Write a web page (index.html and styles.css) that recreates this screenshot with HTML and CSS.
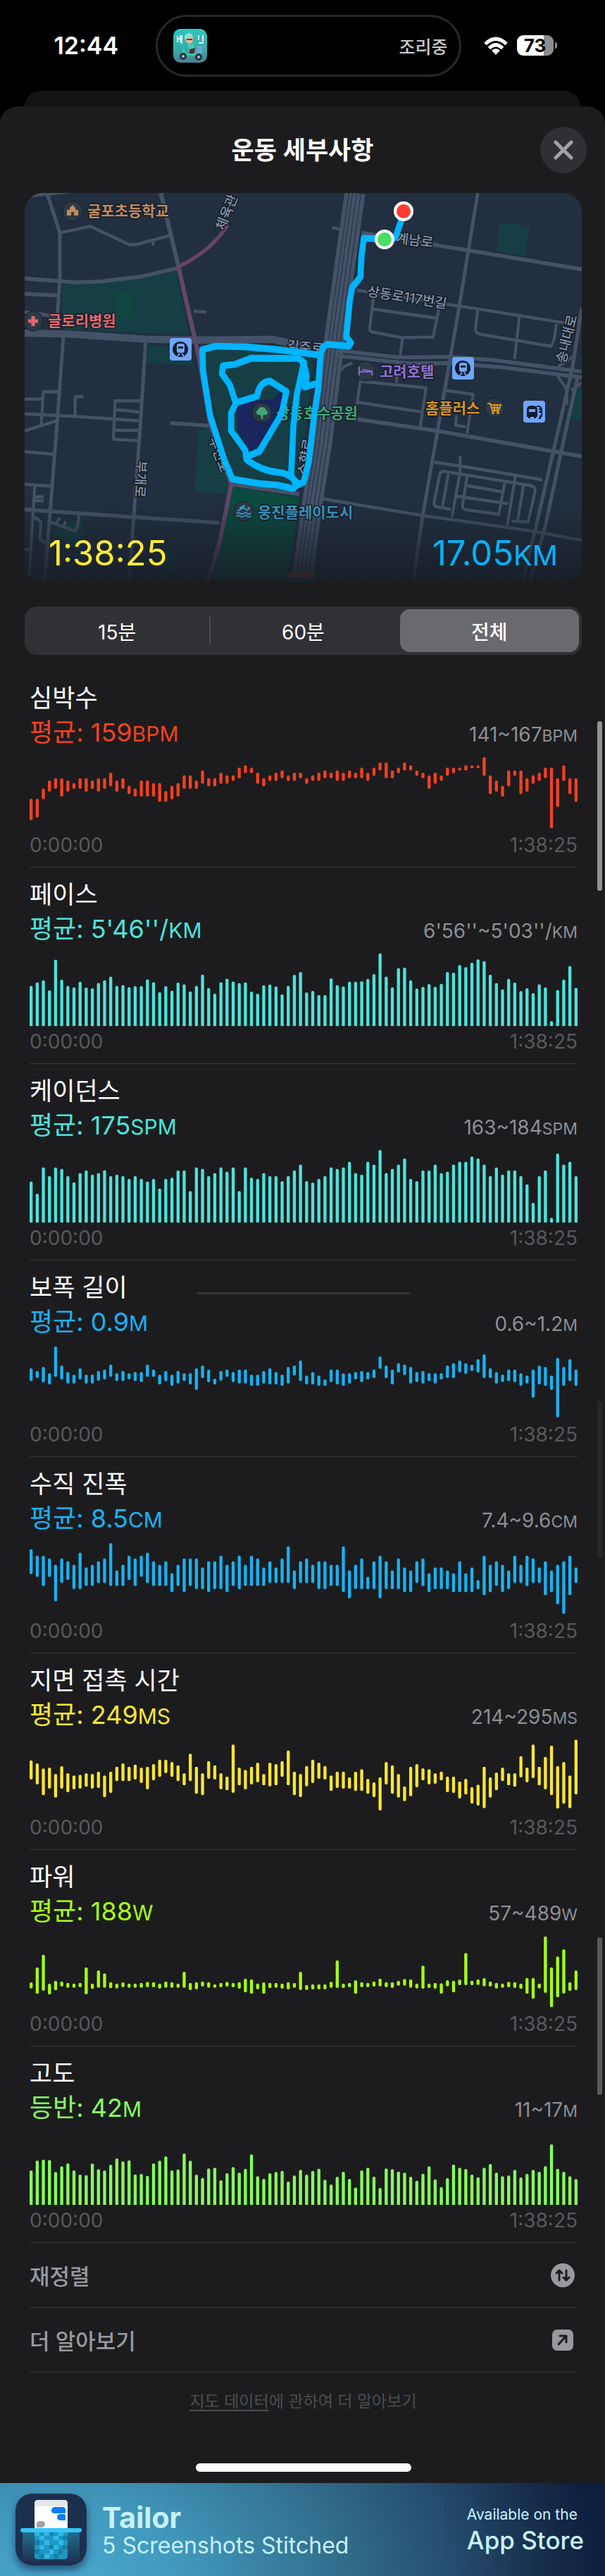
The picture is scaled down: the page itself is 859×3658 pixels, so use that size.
FILE: index.html
```html
<!DOCTYPE html>
<html lang="ko">
<head>
    <meta charset="UTF-8">
    <meta name="viewport" content="width=device-width, initial-scale=1.0">
    <title>운동 세부사항</title>
    <link rel="stylesheet" href="styles.css">
</head>
<body>
    <header class="status-bar">
        <time class="clock">12:44</time>
        <div class="island">
            <svg class="island-icon" viewBox="0 0 48 48" aria-hidden="true">
                <defs>
                    <linearGradient id="deliveryBg" x1="0" y1="0" x2="0" y2="1">
                        <stop offset="0" stop-color="#2fc6bf"/>
                        <stop offset=".65" stop-color="#35aaa9"/>
                        <stop offset="1" stop-color="#4f7f93"/>
                    </linearGradient>
                </defs>
                <rect width="48" height="48" rx="10" fill="url(#deliveryBg)"/>
                <path d="M6 10v9M6 14h4M10 9v10M12 9v12M36 9v7M42 9v9M36 20h7" stroke="#d9f7f3" stroke-width="2" fill="none"/>
                <circle cx="22" cy="12" r="6" fill="#8fe0da"/>
                <circle cx="23" cy="16" r="5" fill="#e9b596"/>
                <path d="M19 15h8" stroke="#5b4436" stroke-width="2"/>
                <path d="M20 22l8-1 3 9-8 4z" fill="#4cc9c0"/>
                <path d="M23 29l8-2-2 9-6 2z" fill="#4a2f2b"/>
                <rect x="33" y="24" width="8" height="11" rx="2" fill="#6ea4c9"/>
                <path d="M14 25l4 10h18l3 3H13z" fill="#3ec7a9"/>
                <circle cx="14" cy="39" r="5" fill="#27323c"/><circle cx="14" cy="39" r="2" fill="#a9c4cc"/>
                <circle cx="36" cy="40" r="5" fill="#27323c"/><circle cx="36" cy="40" r="2" fill="#a9c4cc"/>
            </svg>
            <span class="island-text">조리중</span>
        </div>
        <div class="status-icons">
            <svg class="wifi" viewBox="0 0 34 26" aria-label="Wi-Fi">
                <g fill="none" stroke="#fff" stroke-width="5">
                    <path d="M2 10.500Q17-4 32 10.500"/>
                    <path d="M7.500 16.500Q17 7 26.500 16.500"/>
                </g>
                <path d="M17 26l-6-6.500q6-5 12 0z" fill="#fff"/>
            </svg>
            <div class="battery"><span>73</span></div>
        </div>
    </header>
    <div class="sheet-behind"></div>

    <main class="sheet">
        <div class="sheet-header">
            <h1>운동 세부사항</h1>
            <button class="close-btn" type="button" aria-label="닫기">
                <svg viewBox="0 0 28 28"><path d="M3 3l22 22M25 3L3 25"/></svg>
            </button>
        </div>

        <section class="map-card">
            <svg class="map" viewBox="0 0 791 552" role="img" aria-label="운동 경로 지도">
                <defs>
                    <linearGradient id="mapShade" x1="0" y1="0" x2="0" y2="1">
                        <stop offset="0" stop-color="#181d26" stop-opacity="0"/>
                        <stop offset="1" stop-color="#181d26" stop-opacity=".9"/>
                    </linearGradient>
                </defs>
                <rect width="791" height="552" fill="#212f40"/>
                <g transform="scale(.3333 .37) translate(-105 -37)">
                    <!-- parks and water -->
                    <g fill="#153e45">
                        <path d="M265 388L600 365 750 340 805 583 265 560z"/>
                        <path d="M630 622h95l115 78-215-10z"/>
                        <path d="M855 625L1340 655 1270 1170 985 1150z"/>
                        <path d="M845 945l50-5 90 215-15 38-142-8z"/>
                        <path d="M215 1340l140-65-15 125z"/>
                        <path d="M700 1415h55l-5 65-55 30z"/>
                        <path d="M2127 150l130 13-22 115-120-16z"/>
                        <path d="M2450 790l28-15v137l-60-12z"/>
                    </g>
                    <path d="M490 415l75 3 7 102h-80z" fill="#0f4740"/>
                    <path d="M985 1165l290 40-35 245-25 80H905z" fill="#0c4a40"/>
                    <path d="M1005 860Q1090 826 1160 830l35-30 30 15-25 70-125 150-60-80z" fill="#1a265e"/>
                    <!-- highway -->
                    <path d="M1512 37L1440 500l-15 100-55 400-35 200-50 330" fill="none" stroke="#445268" stroke-width="88"/>
                    <g fill="none" stroke="#2a3749" stroke-width="4">
                        <path d="M1487 37L1415 500l-15 100-55 400-35 200-50 330"/>
                        <path d="M1502 37L1430 500l-15 100-55 400-35 200-50 330"/>
                        <path d="M1520 37L1448 500l-15 100-55 400-35 200-50 330"/>
                        <path d="M1538 37L1466 500l-15 100-55 400-35 200-50 330"/>
                    </g>
                    <!-- streets -->
                    <g fill="none" stroke="#445268" stroke-width="12" stroke-linejoin="round">
                        <path d="M255 190L385 165 550 235h30l145-35M652 225v14M825 490l54 5"/>
                        <path d="M105 828h75M175 930l10-130h70M105 950l140-40M320 890v-70l35-2"/>
                        <path d="M597 835H490l-7 147 107 6M490 868l107 10M487 948h108"/>
                        <path d="M105 885l225 10 270 17M105 1030l130 10M105 1155l110 7M148 1160l-23 345 65 7M148 1203h38M148 1218h38"/>
                        <path d="M145 1280l30 20-5 65 35 25M215 1300l105 35Q335 1320 335 1270M240 1305l15-22M272 1315l8-18M105 1405h20"/>
                        <path d="M1415 170l45 8M1520 410l390 55 125 17 400 58M1590 440l-15 120q0 10 20 12l115 20 135-2 25-110M1590 483l275 35M1715 590l-10 70"/>
                        <path d="M2035 485l-10 75q0 15 25 20l295 45q15-5 25-85M2212 515l-20 160"/>
                        <path d="M1520 850l15-90 280 25-25 150M1520 840l280 38M1690 740v25M1900 795l115 15-25 150M1945 890l-5 38 45 7"/>
                        <path d="M1850 1070l180 25 280 43M1960 1045v65l-35 170"/>
                        <path d="M1920 1252l-65-12q-8-5-5-20l25-110 15-5 370 55q20 5 20 20l-30 120-70-3M1910 1115l-25 125"/>
                        <path d="M1990 1120l-20 120q0 10 15 13l140 17 25-120M1990 1160l155 25M1940 1200l225 30M2195 1125l-35 195M2230 1160l-25 135"/>
                        <path d="M1370 1210l430 65 470 60 208 35M2375 740l40 50v60M2478 765l-45 30M2375 705l65-40"/>
                        <path d="M1440 730q20-30 60-40M1400 600q-20 15-50 25"/>
                    </g>
                    <g fill="none" stroke="#445268" stroke-width="15" stroke-linejoin="round">
                        <path d="M105 50L300 30M200 37l55 153v180l-10 130M105 365l215 15 110-3 170-19 160-33M105 424l140 6M105 495l140 15"/>
                        <path d="M270 590L245 900 190 1530M620 610L600 900 550 1530M105 1252l255 16 575 35"/>
                        <path d="M1540 190l300 45 160 23 478 72M2035 37l-40 223-40 220-35 180-60 310-60 310-40 250"/>
                        <path d="M1520 905l340 45 618 98M725 920l165 10M985 1155l290 38"/>
                        <path d="M1440 642l260 26 220-2 180 12 378 45M1440 662l310 30 170-2 230 17 328 38"/>
                        <path d="M2478 480l-38 220-15 60-35 140-110 430-55 200M2462 740l-45 180-95 400-65 210"/>
                    </g>
                    <g fill="none" stroke="#445268" stroke-linejoin="round">
                        <path d="M685 37l25 93 50 190 70 275" stroke-width="18"/>
                        <path d="M105 575l175 3 340 20 210 4 330-3 130 24" stroke-width="28"/>
                        <path d="M760 320Q900 260 970 160" stroke-width="12"/>
                        <path d="M830 590l20 90 45 240 90 235-50 225-50 150" stroke-width="18"/>
                    </g>
                    <!-- district boundary -->
                    <path d="M970 160Q900 260 760 320l70 275 20 85 45 240 90 235-50 225-50 150" fill="none" stroke="#75406a" stroke-opacity=".45" stroke-width="18"/>
                    <path d="M970 160Q900 260 760 320l70 275 20 85 45 240 90 235-50 225-50 150" fill="none" stroke="#75406a" stroke-opacity=".8" stroke-width="8" stroke-dasharray="28 10"/>
                </g>
                <g class="road-label">
                    <text transform="translate(293 30) rotate(-68)">체육관</text>
                    <text transform="translate(158 406) rotate(93)">부개로</text>
                    <text transform="translate(270 374) rotate(70)">부천로</text>
                    <text transform="translate(398 226) rotate(5)">길주로</text>
                    <text transform="translate(405 376) rotate(-80)">소향로</text>
                    <text transform="translate(553 74) rotate(7)">계남로</text>
                    <text transform="translate(542 155) rotate(9)">상동로117번길</text>
                    <text transform="translate(776 209) rotate(-76)">송내대로</text>
                </g>
                <text class="place park" x="357" y="320">상동호수공원</text>
                <!-- running route -->
                <g transform="scale(.3333 .37) translate(-105 -37)" fill="none" stroke="#00b4ff" stroke-width="26" stroke-linejoin="round" stroke-linecap="round">
                    <path d="M1365 660L1290 650 1180 638 1050 628 920 625 862 638 865 720 895 890 955 1060 990 1135 1100 1152 1180 1158 1250 1172 1268 1150"/>
                    <path d="M1365 660l-10 130-15 90-25 190-22 78-28 10"/>
                    <path d="M1268 1155Q1240 1115 1190 1110q-75-5-140-50l-5-35-60-75v-70l20-35-25-70-35-45 5-30 50-5 70-24 200 1 25 15-30 120-15 123-10 190 25 40"/>
                    <path d="M1290 690q25 45 8 92l45-12"/>
                    <path d="M1005 842l90-25q10-55 55-58l70 40-20 85-95 145-40 15"/>
                    <path d="M1365 660l10-30 20-12 90 7 10-13-20-22 15-140 10-50 35-40 5-80 10-70 90 5 45-8 32-85"/>
                </g>
                <circle cx="511" cy="66" r="12" fill="#4cdd64" stroke="#fff" stroke-width="4"/>
                <circle cx="538" cy="26" r="12" fill="#ff3b30" stroke="#fff" stroke-width="4"/>

                <!-- places -->
                <g fill="#2b3a46" stroke="#18222d" stroke-width="1">
                    <circle cx="68" cy="26" r="14"/><circle cx="12" cy="182" r="14"/><circle cx="337" cy="312" r="14"/>
                    <circle cx="311" cy="452" r="14"/><circle cx="484" cy="253" r="14"/><circle cx="667" cy="305" r="14"/>
                </g>
                <path d="M60 32v-8h4v-3l4-4 4 4v3h4v8h-6v-5h-4v5z" fill="#c08a62"/>
                <path d="M12 175v14M5 182h14" stroke="#e0696e" stroke-width="5"/>
                <path d="M337 304q5 0 5 4 4 1 3 5-2 3-6 2l-1 5 2 1h-6l2-1-1-5q-4 1-6-2-1-4 3-5 0-4 5-4z" fill="#3da876"/>
                <g fill="none" stroke="#3d9cc8" stroke-width="2" stroke-linecap="round">
                    <path d="M301 455q3-2 5 0t5 0 5 0 5 0M301 459q3-2 5 0t5 0 5 0 5 0M303 451l8-4 5 4M306 447l6-3"/>
                    <circle cx="318" cy="448" r="1"/>
                </g>
                <path d="M475 247v12M475 254h18v5M479 251l14 2v2" fill="none" stroke="#8467c6" stroke-width="2"/>
                <path d="M657 299h4l3 10h9l3-8h-14M663 305h12M667 301v8M671 301v8" fill="none" stroke="#d8951f" stroke-width="2"/>
                <circle cx="665" cy="312" r="2" fill="#d8951f"/><circle cx="672" cy="312" r="2" fill="#d8951f"/>
                <g id="stationIcon">
                    <rect x="206" y="206" width="31" height="32" rx="4" fill="#6fa5fb"/>
                    <circle cx="221" cy="222" r="11" fill="#101b2f"/>
                    <rect x="216" y="214" width="11" height="13" rx="3" fill="#6fa5fb"/>
                    <path d="M218 218h7v3h-7z" fill="#101b2f"/>
                    <path d="M217 232l3-4M226 232l-3-4" stroke="#6fa5fb" stroke-width="2"/>
                </g>
                <use href="#stationIcon" x="401" y="27"/>
                <rect x="708" y="295" width="31" height="31" rx="4" fill="#6fa5fb"/>
                <path d="M713 318v-10q0-6 6-6h3q6 0 6 6v10h-2v2h-3v-2h-5v2h-3v-2z" fill="#101b2f"/>
                <path d="M716 307h9v4h-9z" fill="#6fa5fb"/>
                <path d="M727 303q7-1 7 6v8h-2v3h-2M730 307h3v4h-3" fill="none" stroke="#101b2f" stroke-width="2"/>
                <text class="place school" x="89" y="33">굴포초등학교</text>
                <text class="place hospital" x="33" y="189">글로리병원</text>
                <text class="place swim" x="331" y="461">웅진플레이도시</text>
                <text class="place hotel" x="504" y="261">고려호텔</text>
                <text class="place shop" x="569" y="313">홈플러스</text>
                <path d="M369 541q6 1 10-2 12 4 22 0 5 3 11 2v11h-43z" fill="#24437c"/>
                <path d="M369 541q6 1 10-2 12 4 22 0 5 3 11 2l-3 5h-37z" fill="#a8402f"/>
                <rect y="440" width="791" height="112" fill="url(#mapShade)"/>
            </svg>
            <div class="map-stats">
                <span class="total-time">1:38:25</span>
                <span class="total-distance">17.05<small>KM</small></span>
            </div>
        </section>

        <div class="segmented">
            <button type="button">15분</button>
            <button type="button">60분</button>
            <button type="button" class="active">전체</button>
        </div>

        <div class="metrics">
            <section class="metric heart">
                <h2>심박수</h2>
                <div class="values"><p>평균: 159<small>BPM</small></p><p class="range">141~167<small>BPM</small></p></div>
                <svg class="chart" data-series="heart"></svg>
                <div class="axis"><span>0:00:00</span><span>1:38:25</span></div>
            </section>
            <section class="metric pace">
                <h2>페이스</h2>
                <div class="values"><p>평균: 5'46''/<small>KM</small></p><p class="range">6'56''~5'03''/<small>KM</small></p></div>
                <svg class="chart" data-series="pace"></svg>
                <div class="axis"><span>0:00:00</span><span>1:38:25</span></div>
            </section>
            <section class="metric pace">
                <h2>케이던스</h2>
                <div class="values"><p>평균: 175<small>SPM</small></p><p class="range">163~184<small>SPM</small></p></div>
                <svg class="chart" data-series="cadence"></svg>
                <div class="axis"><span>0:00:00</span><span>1:38:25</span></div>
            </section>
            <section class="metric stride">
                <h2>보폭 길이</h2>
                <div class="values"><p>평균: 0.9<small>M</small></p><p class="range">0.6~1.2<small>M</small></p></div>
                <svg class="chart" data-series="stride"></svg>
                <div class="axis"><span>0:00:00</span><span>1:38:25</span></div>
            </section>
            <section class="metric stride">
                <h2>수직 진폭</h2>
                <div class="values"><p>평균: 8.5<small>CM</small></p><p class="range">7.4~9.6<small>CM</small></p></div>
                <svg class="chart" data-series="oscillation"></svg>
                <div class="axis"><span>0:00:00</span><span>1:38:25</span></div>
            </section>
            <section class="metric contact">
                <h2>지면 접촉 시간</h2>
                <div class="values"><p>평균: 249<small>MS</small></p><p class="range">214~295<small>MS</small></p></div>
                <svg class="chart" data-series="contact"></svg>
                <div class="axis"><span>0:00:00</span><span>1:38:25</span></div>
            </section>
            <section class="metric power">
                <h2>파워</h2>
                <div class="values"><p>평균: 188<small>W</small></p><p class="range">57~489<small>W</small></p></div>
                <svg class="chart" data-series="power"></svg>
                <div class="axis"><span>0:00:00</span><span>1:38:25</span></div>
            </section>
            <section class="metric elevation">
                <h2>고도</h2>
                <div class="values"><p>등반: 42<small>M</small></p><p class="range">11~17<small>M</small></p></div>
                <svg class="chart" data-series="elevation"></svg>
                <div class="axis"><span>0:00:00</span><span>1:38:25</span></div>
            </section>

            <button class="action-row" type="button">
                <span>재정렬</span>
                <svg viewBox="0 0 34 34"><circle cx="17" cy="17" r="17" fill="#98989d"/><path d="M12 24V10M8 14l4-4 4 4M22 10v14M18 20l4 4 4-4"/></svg>
            </button>
            <a class="action-row" href="#more">
                <span>더 알아보기</span>
                <svg viewBox="0 0 34 34"><rect x="2" y="2" width="30" height="30" rx="7" fill="#98989d"/><path d="M11 23L22 11M13 11h9v9" stroke-width="4"/></svg>
            </a>
        </div>

        <p class="map-note"><a href="#map-data">지도 데이터</a>에 관하여 더 알아보기</p>
        <div class="home-bar"></div>

        <i class="scroll-mark first"></i>
        <i class="scroll-mark second"></i>
        <i class="scroll-mark third"></i>
        <i class="home-ghost"></i>
    </main>

    <footer class="banner">
        <svg class="banner-icon" viewBox="0 0 101 102" aria-hidden="true">
            <defs>
                <linearGradient id="pocket" x1="0" y1="0" x2="0" y2="1">
                    <stop offset="0" stop-color="#22708f"/>
                    <stop offset="1" stop-color="#1c304e"/>
                </linearGradient>
            </defs>
            <rect width="101" height="102" rx="23" fill="#1c304e"/>
            <rect x="10" y="54" width="81" height="44" rx="4" fill="url(#pocket)"/>
            <rect x="27" y="9" width="47" height="50" rx="5" fill="#fff"/>
            <path d="M27 18v-4q0-5 5-5h37q5 0 5 5v4z" fill="#e6e6ea"/>
            <path d="M55 19h12q4 0 4 4v5H55q-4 0-4-4t4-5zM64 29h4q3 0 3 3v6h-7q-5 0-5-5 0-4 5-4z" fill="#0a7df5"/>
            <path d="M30 48v-5q0-4 6-4t6 4-4 5z" fill="#a3a3a6"/>
            <rect x="27" y="54" width="47" height="39" rx="4" fill="#1f97c3"/>
            <g fill="#2eb9e8">
                <path d="M27 54h7v6h-7zM41 54h7v6h-7zM61 54h7v6h-7zM34 60h7v6h-7zM54 60h7v6h-7zM41 66h7v7h-7zM61 66h7v7h-7zM34 73h7v6h-7zM54 73h7v6h-7zM48 79h6v7h-6zM41 86h7v6h-7z"/>
            </g>
            <g fill="#1a7ea6">
                <path d="M48 54h6v6h-6zM67 60h7v6h-7zM27 66h7v7h-7zM48 73h6v6h-6zM67 73h7v6h-7zM27 79h7v7h-7zM61 79h6v7h-6zM34 86h7v6h-7zM54 86h7v6h-7z"/>
            </g>
            <rect x="7" y="49" width="87" height="6" rx="3" fill="#35c6f7"/>
        </svg>
        <div class="banner-text">
            <strong>Tailor</strong>
            <span>5 Screenshots Stitched</span>
        </div>
        <div class="banner-store">
            <span>Available on the</span>
            <strong>App Store</strong>
        </div>
    </footer>
    <script src="charts.js"></script>
</body>
</html>
```

FILE: styles.css
```css
* {
    box-sizing: border-box;
}
body {
    margin: 0;
    background-color: #000;
    color: #fff;
    font-family: Inter, "Noto Sans CJK KR", sans-serif;
}
h1, h2, p {
    margin: 0;
    font-weight: 400;
}
button {
    font-family: inherit;
    border: none;
    padding: 0;
    color: inherit;
    background: none;
    cursor: pointer;
}
a {
    color: inherit;
}

/* Status bar */
.status-bar {
    height: 129px;
    display: grid;
    grid-template-columns: 1fr 434px 1fr;
    align-items: center;
}
.clock {
    padding-left: 32px;
    text-align: center;
    font-size: 34px;
    font-weight: 600;
}
.island {
    height: 88px;
    margin-left: 8px;
    margin-right: -8px;
    padding: 0 16px 0 22px;
    border: 3px solid #29292a;
    border-radius: 44px;
    display: flex;
    align-items: center;
    justify-content: space-between;
}
.island-icon {
    width: 48px;
    height: 48px;
}
.island-text {
    color: #c9c9ca;
    font-size: 25px;
    font-weight: 500;
}
.status-icons {
    display: flex;
    align-items: center;
    gap: 13px;
    padding-left: 40px;
}
.wifi {
    width: 34px;
    height: 26px;
}
.battery {
    position: relative;
    width: 52px;
    height: 29px;
    border-radius: 9px;
    background: linear-gradient(90deg, #fff 73%, #8c8c8c 73%);
    color: #000;
    font-size: 26px;
    font-weight: 700;
    line-height: 29px;
    text-align: center;
}
.battery::after {
    content: "";
    position: absolute;
    right: -5px;
    top: 10px;
    width: 3px;
    height: 9px;
    border-radius: 0 4px 4px 0;
    background-color: #8c8c8c;
}

/* Sheet */
.sheet-behind {
    height: 22px;
    margin: 0 35px;
    border-radius: 22px 22px 0 0;
    background-color: #141414;
}
.sheet {
    position: relative;
    padding: 0 33px 16px 35px;
    border-radius: 25px 25px 0 0;
    background-color: #1c1c1e;
}
.sheet-header {
    display: grid;
    grid-template-columns: 66px 1fr 66px;
    align-items: center;
    height: 123px;
    margin-right: -7px;
    margin-left: -9px;
}
.sheet-header h1 {
    grid-column: 2;
    padding-bottom: 4px;
    text-align: center;
    font-size: 35px;
    font-weight: 600;
}
.close-btn {
    display: flex;
    align-items: center;
    justify-content: center;
    width: 66px;
    height: 66px;
    border-radius: 50%;
    background-color: #303034;
}
.close-btn svg {
    width: 28px;
    height: 28px;
    fill: none;
    stroke: #a0a0a6;
    stroke-width: 5;
    stroke-linecap: round;
}

/* Map */
.map-card {
    position: relative;
    overflow: hidden;
    border-radius: 26px;
}
.map {
    display: block;
    width: 100%;
}
.map text {
    paint-order: stroke;
    stroke: #151c26;
    stroke-width: 3px;
    stroke-linejoin: round;
}
.place {
    font-size: 21px;
    font-weight: 700;
}
.park { fill: #3da876; }
.school { fill: #c08a62; }
.hospital { fill: #e0696e; }
.swim { fill: #3d9cc8; }
.hotel { fill: #8f72d0; }
.shop { fill: #d8951f; }
.road-label text {
    fill: #8491a8;
    font-size: 19px;
    font-weight: 500;
    text-anchor: middle;
}
.map-stats {
    position: absolute;
    left: 0;
    right: 0;
    bottom: 11px;
    display: flex;
    justify-content: space-between;
    align-items: baseline;
    padding: 0 34px;
    font-size: 49px;
}
.map-stats small {
    font-size: 40px;
}
.total-time { color: #ffeb36; }
.total-distance { color: #05b2fa; }

/* Range picker */
.segmented {
    display: flex;
    gap: 10px;
    height: 69px;
    margin-top: 35px;
    padding: 4px;
    border-radius: 18px;
    background-color: #313135;
}
.segmented button {
    position: relative;
    flex: 1;
    border-radius: 14px;
    font-size: 28px;
    font-weight: 400;
}
.segmented button:first-child::after {
    content: "";
    position: absolute;
    right: -6px;
    top: 11px;
    width: 2px;
    height: 39px;
    background-color: #4a4a4e;
}
.segmented .active {
    background-color: #69696e;
    font-weight: 500;
}

/* Metrics */
.metrics {
    margin-top: 23px;
    padding: 0 6px 0 7px;
}
.metric {
    padding: 14px 0 16px;
    border-bottom: 1px solid #38383a;
}
.metric h2 {
    font-size: 35px;
    line-height: 49px;
}
.values {
    display: flex;
    justify-content: space-between;
    align-items: baseline;
    height: 49px;
    font-size: 36px;
    line-height: 49px;
}
.values small {
    font-size: 30px;
}
.values .range {
    color: #8e8e93;
    font-size: 28px;
}
.values .range small {
    font-size: 23px;
}
.chart {
    display: block;
    width: 100%;
    height: 104px;
    margin-top: 9px;
    fill: currentColor;
}
.axis {
    display: flex;
    justify-content: space-between;
    margin-top: 7px;
    color: #58585c;
    font-size: 28px;
    line-height: 30px;
}
.metric h2 { color: #fff; }
.heart { color: #f4411f; }
.pace { color: #4ce3dc; }
.stride { color: #18b2f2; }
.contact { color: #fbe633; }
.power { color: #a7ff13; }
.elevation { color: #87ff5e; }

.action-row {
    display: flex;
    align-items: center;
    justify-content: space-between;
    width: 100%;
    height: 92px;
    padding-right: 4px;
    border-bottom: 1px solid #38383a;
    color: #98989d;
    font-size: 31px;
    font-weight: 500;
    text-decoration: none;
}
.action-row svg {
    width: 34px;
    height: 34px;
}
.action-row path {
    fill: none;
    stroke: #1c1c1e;
    stroke-width: 3;
    stroke-linecap: round;
    stroke-linejoin: round;
}
.map-note {
    margin-top: 24px;
    color: #4c4c50;
    font-size: 23px;
    line-height: 34px;
    text-align: center;
}
.map-note a {
    text-underline-offset: 4px;
}
.home-bar {
    width: 306px;
    height: 12px;
    margin: 71px auto 0;
    border-radius: 6px;
    background-color: #fff;
}

/* Scroll indicators lying over the sheet */
.scroll-mark {
    position: absolute;
    right: 4px;
    width: 7px;
    border-radius: 4px;
}
.scroll-mark.first {
    top: 873px;
    height: 241px;
    background-color: #929294;
}
.scroll-mark.second {
    top: 1838px;
    height: 224px;
    background-color: #27272a;
}
.scroll-mark.third {
    top: 2600px;
    height: 224px;
    background-color: #59595b;
}
.home-ghost {
    position: absolute;
    top: 1684px;
    left: 50%;
    width: 304px;
    height: 3px;
    margin-left: -151px;
    border-radius: 3px 3px 0 0;
    background-color: #343436;
}

/* Banner */
.banner {
    display: flex;
    align-items: center;
    height: 132px;
    padding: 0 30px 0 22px;
    background: radial-gradient(ellipse 760px 520px at 90px 110%, #4aa8cf 0%, #4199bd 22%, #33708f 50%, #264e70 72%, #152a48 92%, #0e2040 100%);
    color: #c6f2ff;
}
.banner-icon {
    width: 101px;
    height: 102px;
    border-radius: 23px;
    box-shadow: 0 6px 12px rgba(20, 50, 85, 0.7);
}
.banner-text, .banner-store {
    display: flex;
    flex-direction: column;
}
.banner-text {
    padding-top: 4px;
    margin-left: 22px;
}
.banner-text strong {
    font-size: 41px;
    line-height: 42px;
}
.banner-text span {
    font-size: 32px;
    line-height: 38px;
}
.banner-store {
    justify-content: center;
    height: 88px;
    margin-left: auto;
    padding-left: 35px;
    border-left: 1px solid #3c5473;
}
.banner-store span {
    font-size: 21px;
    line-height: 30px;
}
.banner-store strong {
    font-size: 35px;
    font-weight: 500;
    line-height: 42px;
}
```

FILE: charts.js
```js
// Each series has a vertical domain (top, bottom). A sample is either
// "top-bottom" for a floating bar or "top" for a bar standing on the floor.
const series = {
    heart: {
        domain: [699, 1011],
        samples: '880-972 880-960 836-882 802-850 792-838 792-871 802-850 813-838 792-838 792-850 802-838 792-850 792-838 769-827 802-850 792-838 824-860 836-871 802-871 802-871 813-871 813-893 847-893 824-882 813-871 780-838 780-838 802-838 759-816 792-827 792-827 769-816 780-816 780-804 747-793 737-771 747-771 769-816 792-827 780-804 769-804 759-793 780-804 769-804 769-793 792-816 780-804 769-804 759-793 769-793 759-804 769-804 759-793 769-793 747-793 769-804 747-782 725-760 725-793 759-793 747-771 725-760 737-760 759-782 769-793 780-838 769-816 780-804 747-782 747-771 747-760 737-760 737-750 737-750 703-782 780-860 802-850 824-871 759-827 759-782 759-860 792-850 780-816 769-804 747-793 747-1006 792-915 737-804 792-860 792-893'
    },
    pace: {
        domain: [369, 681],
        samples: '510 495 486 529 398 483 510 516 492 517 520 497 486 470 510 506 515 511 511 482 494 537 511 530 496 503 534 510 462 519 543 494 479 491 498 495 534 543 507 504 512 546 510 463 451 538 531 549 549 478 506 512 492 492 490 480 460 371 470 516 434 432 486 521 514 502 514 501 451 454 421 430 411 397 404 462 498 524 480 496 532 520 541 503 516 660 527 483 425 518'
    },
    cadence: {
        domain: [366, 678],
        samples: '503 555 443 480 443 449 480 507 467 456 474 467 455 480 474 480 492 480 492 503 492 533 492 487 456 456 544 443 449 480 467 443 461 443 544 443 487 492 467 480 480 502 480 456 431 502 508 492 480 443 449 443 419 467 474 419 431 369 467 449 431 405 492 502 456 456 431 467 461 431 419 419 397 405 431 480 443 474 456 456 480 515 594 480 456 658 384 431 419 480'
    },
    stride: {
        domain: [363, 675],
        samples: '459-514 470-501 453-519 480-528 366-496 447-507 475-524 486-524 459-507 486-524 486-524 470-512 464-507 443-496 480-514 470-514 480-507 475-514 475-518 443-496 464-496 486-528 470-514 486-534 470-524 480-514 480-528 459-551 447-501 464-518 503-528 470-512 464-496 475-518 464-524 464-524 486-534 486-534 470-524 459-528 475-528 486-534 453-524 447-490 426-514 490-528 475-528 490-534 506-534 464-518 464-528 480-534 480-524 475-507 470-518 475-507 464-501 409-461 447-501 464-528 437-477 443-488 453-524 475-518 470-524 480-514 480-524 480-507 447-501 437-501 426-477 437-483 443-471 420-477 399-501 459-501 475-524 486-518 464-514 464-518 480-534 490-524 464-584 447-528 453-534 490-551 415-668 453-534 420-514 464-534'
    },
    oscillation: {
        domain: [360, 672],
        samples: '390-496 417-508 417-547 429-508 456-612 429-534 441-521 456-560 404-560 467-547 456-547 441-534 429-534 364-547 480-547 456-547 417-521 429-547 417-508 404-534 441-547 456-547 441-547 492-573 456-547 429-573 429-547 429-560 467-560 441-573 441-560 417-560 456-573 441-547 417-560 456-547 417-547 429-547 467-547 441-534 467-534 429-534 377-534 480-560 441-534 429-534 456-534 441-560 441-560 456-547 456-547 377-573 480-599 456-560 429-560 507-560 441-560 417-599 441-560 480-560 429-560 467-573 480-573 441-534 429-547 492-573 467-560 467-560 480-560 492-573 441-573 492-573 467-573 521-560 417-586 456-573 441-547 456-573 480-560 417-534 456-534 417-547 429-534 467-534 441-586 480-573 456-625 441-665 417-586 467-534'
    },
    contact: {
        domain: [357, 669],
        samples: '449-531 462-552 484-598 480-570 507-608 474-570 504-585 514-573 511-570 504-562 507-570 497-567 514-606 497-588 476-538 462-538 476-538 467-531 480-546 476-573 465-535 446-520 446-504 456-520 470-538 504-556 421-538 476-592 504-598 452-528 470-531 504-573 518-577 382-588 480-556 490-573 476-552 459-543 507-556 459-560 465-556 452-520 407-556 497-598 507-606 473-560 446-546 459-528 473-531 514-580 497-567 497-570 521-570 497-580 487-580 528-592 543-606 521-663 456-552 470-592 507-608 560-623 476-602 465-564 483-535 487-552 504-549 497-535 518-585 518-588 539-612 528-595 563-634 553-642 476-653 521-608 501-577 480-538 504-556 504-562 431-522 480-543 382-525 476-556 434-573 386-598 473-655 456-634 514-653 361-595'
    },
    power: {
        domain: [384, 696],
        samples: '585-611 521-634 467-621 590-637 578-619 581-603 587-608 590-608 587-606 521-636 590-613 534-608 547-608 584-610 590-611 585-606 590-608 590-608 587-608 583-606 584-606 590-612 581-608 584-608 590-608 540-608 587-618 584-615 581-603 584-608 593-608 587-606 583-603 587-606 584-612 569-628 572-634 590-615 585-634 587-610 587-608 590-612 584-615 587-608 540-618 596-618 593-615 593-615 593-615 583-608 491-609 590-609 587-606 576-634 584-606 587-606 581-603 569-602 584-606 584-609 578-599 571-599 572-608 590-611 514-612 590-609 587-612 589-634 576-602 578-628 573-597 460-597 578-597 572-596 567-602 581-603 587-612 590-608 583-606 584-609 590-613 566-634 566-655 590-611 389-630 521-691 475-649 444-633 584-622 534-618'
    },
    elevation: {
        domain: [383, 695],
        samples: '548 506 502 504 555 531 518 548 566 568 519 543 548 524 497 510 505 565 563 571 518 507 488 548 544 476 507 566 580 540 537 590 560 534 558 541 480 573 584 560 555 550 595 570 546 566 550 541 588 608 575 554 584 621 548 537 575 623 540 543 553 558 575 592 562 531 586 619 581 523 537 542 566 577 537 521 558 573 570 546 578 563 546 554 530 437 541 554 573 585'
    }
};

const SVG_NS = 'http://www.w3.org/2000/svg';
const STEP = 10;
const BAR = 5;

document.querySelectorAll('.chart').forEach(chart => {
    const { domain, samples } = series[chart.dataset.series];
    const [top, bottom] = domain;
    const bars = samples.split(' ');
    const width = (bars.length - 1) * STEP + BAR;

    chart.setAttribute('viewBox', `0 ${top} ${width} ${bottom - top}`);
    chart.setAttribute('preserveAspectRatio', 'none');

    bars.forEach((bar, i) => {
        // floor bars run past the bottom so that only the top end looks round
        const [y1, y2 = bottom + 20] = bar.split('-').map(Number);
        const rect = document.createElementNS(SVG_NS, 'rect');
        rect.setAttribute('x', i * STEP);
        rect.setAttribute('y', y1);
        rect.setAttribute('width', BAR);
        rect.setAttribute('height', y2 - y1);
        rect.setAttribute('rx', 2.5);
        rect.setAttribute('ry', 6);
        chart.appendChild(rect);
    });
});
```
